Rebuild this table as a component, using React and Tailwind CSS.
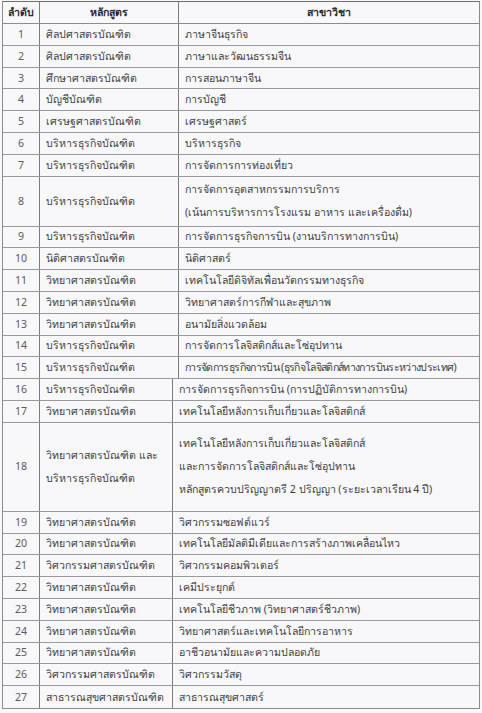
import React from 'react';

const rows = [
  ['1', ['ศิลปศาสตรบัณฑิต'], ['ภาษาจีนธุรกิจ']],
  ['2', ['ศิลปศาสตรบัณฑิต'], ['ภาษาและวัฒนธรรมจีน']],
  ['3', ['ศึกษาศาสตรบัณฑิต'], ['การสอนภาษาจีน']],
  ['4', ['บัญชีบัณฑิต'], ['การบัญชี']],
  ['5', ['เศรษฐศาสตรบัณฑิต'], ['เศรษฐศาสตร์']],
  ['6', ['บริหารธุรกิจบัณฑิต'], ['บริหารธุรกิจ']],
  ['7', ['บริหารธุรกิจบัณฑิต'], ['การจัดการการท่องเที่ยว']],
  ['8', ['บริหารธุรกิจบัณฑิต'], ['การจัดการอุตสาหกรรมการบริการ', '(เน้นการบริหารการโรงแรม อาหาร และเครื่องดื่ม)']],
  ['9', ['บริหารธุรกิจบัณฑิต'], ['การจัดการธุรกิจการบิน (งานบริการทางการบิน)']],
  ['10', ['นิติศาสตรบัณฑิต'], ['นิติศาสตร์']],
  ['11', ['วิทยาศาสตรบัณฑิต'], ['เทคโนโลยีดิจิทัลเพื่อนวัตกรรมทางธุรกิจ']],
  ['12', ['วิทยาศาสตรบัณฑิต'], ['วิทยาศาสตร์การกีฬาและสุขภาพ']],
  ['13', ['วิทยาศาสตรบัณฑิต'], ['อนามัยสิ่งแวดล้อม']],
  ['14', ['บริหารธุรกิจบัณฑิต'], ['การจัดการโลจิสติกส์และโซ่อุปทาน']],
  ['15', ['บริหารธุรกิจบัณฑิต'], ['การจัดการธุรกิจการบิน (ธุรกิจโลจิสติกส์ทางการบินระหว่างประเทศ)']],
  ['16', ['บริหารธุรกิจบัณฑิต'], ['การจัดการธุรกิจการบิน (การปฏิบัติการทางการบิน)']],
  ['17', ['วิทยาศาสตรบัณฑิต'], ['เทคโนโลยีหลังการเก็บเกี่ยวและโลจิสติกส์']],
  ['18', ['วิทยาศาสตรบัณฑิต และ', 'บริหารธุรกิจบัณฑิต'], ['เทคโนโลยีหลังการเก็บเกี่ยวและโลจิสติกส์', 'และการจัดการโลจิสติกส์และโซ่อุปทาน', 'หลักสูตรควบปริญญาตรี 2 ปริญญา (ระยะเวลาเรียน 4 ปี)']],
  ['19', ['วิทยาศาสตรบัณฑิต'], ['วิศวกรรมซอฟต์แวร์']],
  ['20', ['วิทยาศาสตรบัณฑิต'], ['เทคโนโลยีมัลติมีเดียและการสร้างภาพเคลื่อนไหว']],
  ['21', ['วิศวกรรมศาสตรบัณฑิต'], ['วิศวกรรมคอมพิวเตอร์']],
  ['22', ['วิทยาศาสตรบัณฑิต'], ['เคมีประยุกต์']],
  ['23', ['วิทยาศาสตรบัณฑิต'], ['เทคโนโลยีชีวภาพ (วิทยาศาสตร์ชีวภาพ)']],
  ['24', ['วิทยาศาสตรบัณฑิต'], ['วิทยาศาสตร์และเทคโนโลยีการอาหาร']],
  ['25', ['วิทยาศาสตรบัณฑิต'], ['อาชีวอนามัยและความปลอดภัย']],
  ['26', ['วิศวกรรมศาสตรบัณฑิต'], ['วิศวกรรมวัสดุ']],
  ['27', ['สาธารณสุขศาสตรบัณฑิต'], ['สาธารณสุขศาสตร์']],
];

function rowHeight(lines) {
  if (lines === 2) return 'h-[50px]';
  if (lines === 3) return 'h-[89px]';
  return 'h-[21.8px]';
}

export default function App() {
  return (
    <div className="min-h-[713px] w-[482px] bg-[#f8f8fa] pt-px" style={{ fontFamily: '"Noto Sans", Tahoma, sans-serif' }}>
      <div className="mx-[2px] border border-[#8c8c8c] border-t-[#6f6f6f] text-[10.6px] leading-[23px] text-[#404044]">
        {/* header */}
        <div className="flex h-[22px] border-b border-[#8c8c8c] font-bold text-[#2a2a2e]">
          <div className="flex w-[37px] shrink-0 items-center justify-center border-r border-[#7c7c7c]">ลำดับ</div>
          <div className="flex w-[139px] shrink-0 items-center justify-center border-r border-[#7c7c7c]">หลักสูตร</div>
          <div className="flex flex-1 items-center justify-center">สาขาวิชา</div>
        </div>
        {rows.map(([no, course, majors], i) => {
          const lines = Math.max(course.length, majors.length);
          const shifted = Number(no) >= 16;
          return (
            <div key={no} className={`flex ${rowHeight(lines)} ${i < rows.length - 1 ? 'border-b border-[#9a9a9a]' : ''}`}>
              <div className="flex w-[37px] shrink-0 items-center justify-center border-r border-[#7c7c7c] text-[#5b5b60]">{no}</div>
              <div className={`flex ${shifted ? 'w-[133px]' : 'w-[139px]'} shrink-0 flex-col justify-center border-r border-[#7c7c7c] pl-[6px]`}>
                {course.map((t) => (
                  <div key={t} className="whitespace-nowrap">{t}</div>
                ))}
              </div>
              <div className={`flex flex-1 flex-col justify-center pl-[6px] ${no === '15' ? 'tracking-[-0.65px]' : ''}`}>
                {majors.map((t) => (
                  <div key={t} className="whitespace-nowrap">{t}</div>
                ))}
              </div>
            </div>
          );
        })}
      </div>
    </div>
  );
}
